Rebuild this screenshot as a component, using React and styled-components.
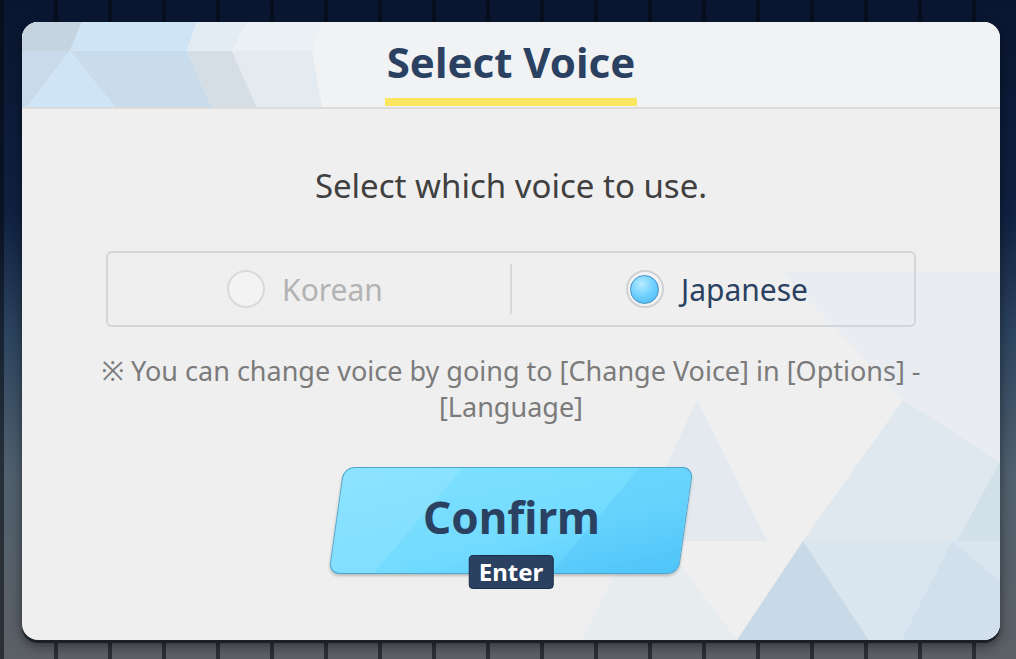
import React, { useState } from 'react';
import styled, { createGlobalStyle } from 'styled-components';

const GlobalStyle = createGlobalStyle`
  html, body {
    margin: 0;
    padding: 0;
    width: 1016px;
    height: 659px;
    overflow: hidden;
  }
  body {
    font-family: "Noto Sans", "Open Sans", sans-serif;
    background:
      repeating-linear-gradient(90deg, rgba(5, 8, 14, 0.55) 0 4px, transparent 4px 54px),
      linear-gradient(180deg, #0a1630 0%, #0f2040 32%, #2f4660 52%, #50606e 72%, #5c6066 100%);
  }
`;

const Screen = styled.div`
  width: 1016px;
  height: 659px;
  box-sizing: border-box;
  padding: 22px 16px 19px 22px;
`;

const Dialog = styled.div`
  position: relative;
  height: 100%;
  border-radius: 16px;
  overflow: hidden;
  background: #efefef;
  box-shadow: 0 3px 0 #1b1f26, 0 6px 12px rgba(0, 0, 0, 0.45);
  display: flex;
  flex-direction: column;
`;

const Backdrop = styled.svg`
  position: absolute;
  inset: 0;
  width: 100%;
  height: 100%;
  pointer-events: none;
`;

const Header = styled.div`
  position: relative;
  height: 85px;
  flex: none;
  border-bottom: 2px solid #dcdcdc;
  display: flex;
  justify-content: center;
  align-items: flex-end;
`;

const Title = styled.h1`
  margin: 0 0 1px;
  padding: 0 2px 1px;
  font-size: 42px;
  line-height: 70px;
  font-weight: 700;
  color: #2b4161;
  border-bottom: 8px solid #fbe65f;
`;

const Body = styled.div`
  position: relative;
  flex: 1;
  display: flex;
  flex-direction: column;
  align-items: center;
  padding-top: 57px;
`;

const Prompt = styled.p`
  margin: 0;
  font-size: 33px;
  line-height: 40px;
  color: #404040;
`;

const Options = styled.div`
  margin-top: 45px;
  width: 810px;
  height: 76px;
  box-sizing: border-box;
  border: 2px solid #d3d6d9;
  border-radius: 6px;
  display: grid;
  grid-template-columns: 1fr 2px 1fr;
  align-items: center;
`;

const Divider = styled.div`
  width: 2px;
  height: 50px;
  background: #d6d8da;
`;

const Option = styled.button`
  display: flex;
  align-items: center;
  justify-content: center;
  gap: 17px;
  height: 100%;
  border: none;
  background: none;
  cursor: pointer;
  font-family: inherit;
  font-size: 30px;
  color: ${(p) => (p.$active ? '#2b4161' : '#b3b3b3')};
  padding: ${(p) => (p.$side === 'left' ? '0 8px 0 0' : '0 0 0 8px')};
`;

const Radio = styled.span`
  width: 38px;
  height: 38px;
  box-sizing: border-box;
  border-radius: 50%;
  border: 2px solid ${(p) => (p.$active ? '#cfd1d3' : '#d9d9d9')};
  display: flex;
  align-items: center;
  justify-content: center;
  background: #f3f3f3;

  &::after {
    content: '';
    display: ${(p) => (p.$active ? 'block' : 'none')};
    width: 29px;
    height: 29px;
    box-sizing: border-box;
    border-radius: 50%;
    border: 1px solid #3f8fc2;
    background: radial-gradient(circle at 40% 30%, #b9ecff 0%, #74d2ff 45%, #45b6f0 100%);
  }
`;

const Note = styled.p`
  margin: 26px 0 0;
  max-width: 860px;
  text-align: center;
  font-size: 27px;
  line-height: 36px;
  color: #7b7b7b;
`;

const ConfirmWrap = styled.div`
  position: relative;
  margin-top: 42px;
  width: 350px;
  height: 107px;
`;

const ConfirmButton = styled.button`
  width: 100%;
  height: 100%;
  border: 1px solid #4ba6cf;
  border-radius: 11px;
  transform: skewX(-8deg);
  background:
    linear-gradient(125deg, rgba(255, 255, 255, 0.1) 0 28%, transparent 28% 70%, rgba(40, 170, 240, 0.16) 70%),
    linear-gradient(165deg, #80e1ff 0%, #72dbff 60%, #56c9fb 100%);
  box-shadow: 0 2px 3px rgba(0, 0, 0, 0.22);
  cursor: pointer;
  padding: 0 0 8px;
  font-family: inherit;
`;

const ConfirmLabel = styled.span`
  display: block;
  transform: skewX(8deg);
  font-size: 44px;
  font-weight: 700;
  color: #2b4161;
`;

const KeyBadge = styled.span`
  position: absolute;
  left: 50%;
  top: 88px;
  transform: translateX(-50%);
  padding: 0 9px;
  height: 32px;
  line-height: 31px;
  border-radius: 4px;
  background: #2b4161;
  border: 1px solid #1d2c44;
  color: #ffffff;
  font-size: 24px;
  font-weight: 700;
`;

const SelectVoice = () => {
  const [voice, setVoice] = useState('ja');

  return (
    <Dialog>
      <Backdrop viewBox="0 0 978 618" preserveAspectRatio="none">
        {/* header facets */}
        <rect x="0" y="0" width="978" height="85" fill="#f0f2f4" />
        <polygon points="0,0 60,0 48,29 0,29" fill="#c6d4df" />
        <polygon points="60,0 175,0 165,29 48,29" fill="#cfe5f6" />
        <polygon points="175,0 225,0 210,29 165,29" fill="#e3ecf3" />
        <polygon points="225,0 300,0 290,29 210,29" fill="#ebf0f4" />
        <polygon points="0,29 48,29 5,85 0,85" fill="#c9dbea" />
        <polygon points="48,29 93,85 5,85" fill="#cfe4f5" />
        <polygon points="48,29 165,29 190,85 93,85" fill="#c9dcec" />
        <polygon points="165,29 210,29 235,85 190,85" fill="#d6dee5" />
        <polygon points="210,29 290,29 300,85 235,85" fill="#e4ebf0" />
        {/* body facets, lower right */}
        <polygon points="760,250 978,250 978,440 881,378" fill="#e2ecf3" opacity="0.45" />
        <polygon points="675,378 610,519 745,519" fill="#c9dced" opacity="0.3" />
        <polygon points="881,378 781,519 978,519 978,440" fill="#cfe1ee" opacity="0.5" />
        <polygon points="978,440 935,519 978,519" fill="#c9dae8" opacity="0.6" />
        <polygon points="781,519 715,618 847,618" fill="#c8dae8" />
        <polygon points="781,519 978,519 978,618 847,618" fill="#d5e4ef" opacity="0.8" />
        <polygon points="930,519 880,618 978,618 978,560" fill="#cbdce9" opacity="0.6" />
        <polygon points="640,519 610,519 560,618 715,618" fill="#dce8f1" opacity="0.4" />
      </Backdrop>

      <Header>
        <Title>Select Voice</Title>
      </Header>

      <Body>
        <Prompt>Select which voice to use.</Prompt>
        <Options>
          <Option $side="left" $active={voice === 'ko'} onClick={() => setVoice('ko')}>
            <Radio $active={voice === 'ko'} />
            Korean
          </Option>
          <Divider />
          <Option $side="right" $active={voice === 'ja'} onClick={() => setVoice('ja')}>
            <Radio $active={voice === 'ja'} />
            Japanese
          </Option>
        </Options>
        <Note>
          ※ You can change voice by going to [Change Voice] in [Options] - [Language]
        </Note>
        <ConfirmWrap>
          <ConfirmButton>
            <ConfirmLabel>Confirm</ConfirmLabel>
          </ConfirmButton>
          <KeyBadge>Enter</KeyBadge>
        </ConfirmWrap>
      </Body>
    </Dialog>
  );
};

export default function App() {
  return (
    <>
      <GlobalStyle />
      <Screen>
        <SelectVoice />
      </Screen>
    </>
  );
}
